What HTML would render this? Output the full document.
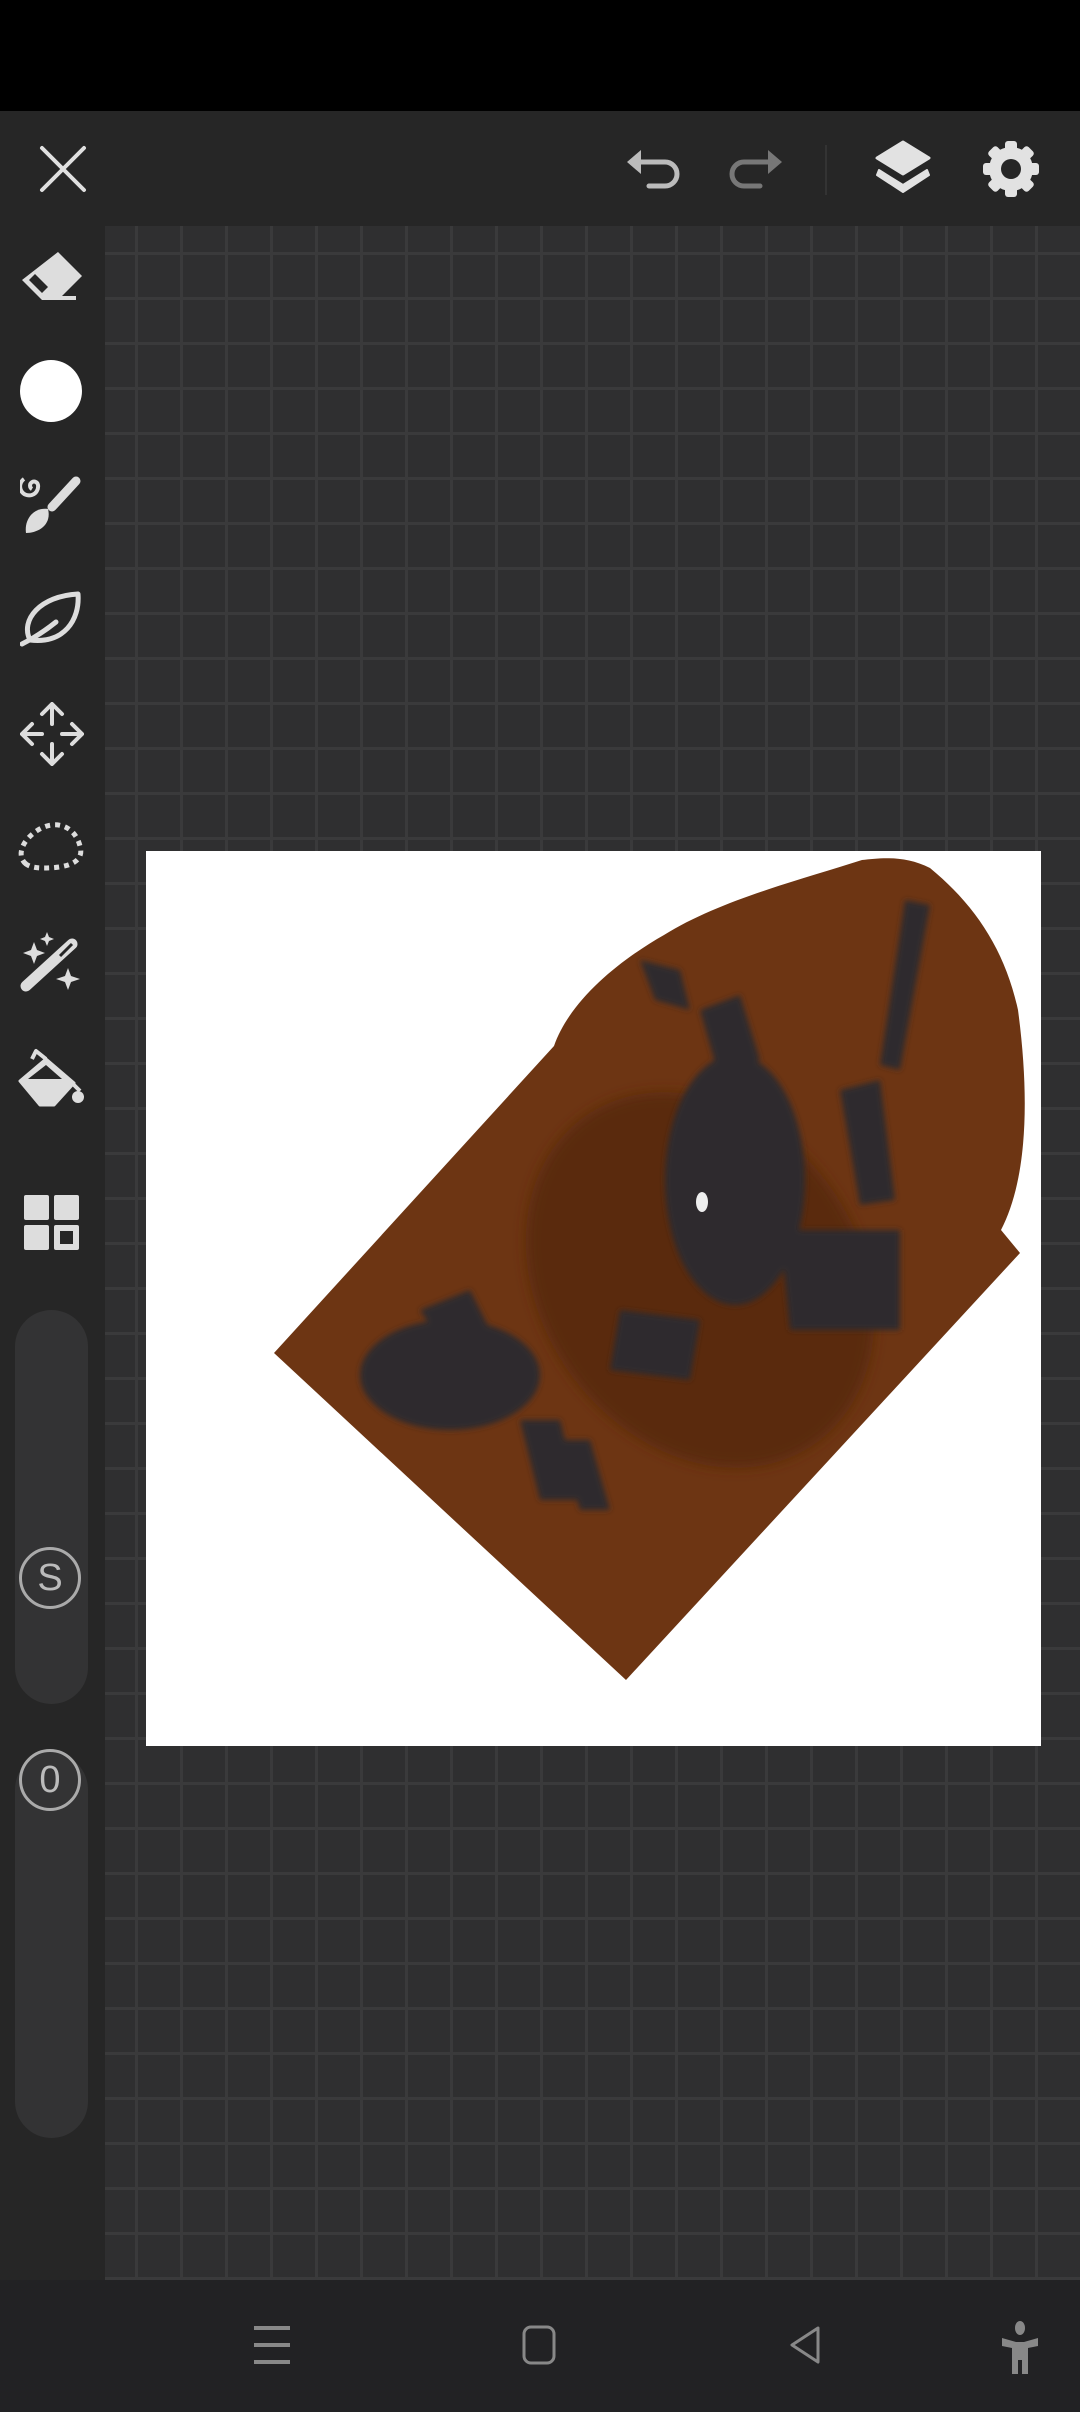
<!DOCTYPE html>
<html><head><meta charset="utf-8"><style>
html,body{margin:0;padding:0;width:1080px;height:2412px;overflow:hidden;background:#262626;font-family:"Liberation Sans",sans-serif}
#top{position:absolute;left:0;top:0;width:1080px;height:111px;background:#000}
#bar{position:absolute;left:0;top:111px;width:1080px;height:115px;background:#262626}
#side{position:absolute;left:0;top:226px;width:105px;height:2054px;background:#262626}
#canvas{position:absolute;left:105px;top:226px;width:975px;height:2054px;background-color:#2f2f30;
background-image:linear-gradient(to right,#3a3a3b 0,#3a3a3b 3px,transparent 3px),linear-gradient(to bottom,#3a3a3b 0,#3a3a3b 3px,transparent 3px);
background-size:45px 45px;background-position:30px 26px}
#nav{position:absolute;left:0;top:2280px;width:1080px;height:132px;background:#222224}
svg{position:absolute}
.sl{position:absolute;left:15px;width:73px;background:#333334;border-radius:37px}
.badge{position:absolute;left:19px;width:62px;height:62px;border:3px solid #aaa;border-radius:50%;box-sizing:border-box;color:#bbb;font-size:38px;text-align:center;line-height:56px;background:#333334}
</style></head><body>
<div id="top"></div>
<div id="bar"></div>
<div id="side"></div>
<div id="canvas"></div>
<div id="nav"></div>

<svg style="left:38px;top:144px" width="50" height="50" viewBox="0 0 50 50"><path d="M4 4L46 46M46 4L4 46" stroke="#e0e0e0" stroke-width="4" stroke-linecap="round"/></svg>
<svg style="left:627px;top:144px" width="60" height="50" viewBox="0 0 60 50"><path d="M0 18L14 6V30Z" fill="#bbb"/><path d="M12 18H38A12 12 0 0 1 38 42H22" stroke="#bbb" stroke-width="5" fill="none" stroke-linecap="round"/></svg>
<svg style="left:722px;top:144px" width="60" height="50" viewBox="0 0 60 50"><path d="M60 18L46 6V30Z" fill="#777"/><path d="M48 18H22A12 12 0 0 0 22 42H38" stroke="#777" stroke-width="5" fill="none" stroke-linecap="round"/></svg>
<div style="position:absolute;left:825px;top:145px;width:2px;height:50px;background:#333"></div>
<svg style="left:873px;top:140px" width="60" height="60" viewBox="0 0 60 60"><path d="M30 2L56 18L30 34L4 18Z" fill="#e2e2e2" stroke="#e2e2e2" stroke-width="3" stroke-linejoin="round"/><path d="M6 30L30 45L54 30L56 35L30 52L4 35Z" fill="#e2e2e2" stroke="#e2e2e2" stroke-width="2" stroke-linejoin="round"/></svg>
<svg style="left:981px;top:139px" width="60" height="60" viewBox="0 0 60 60"><g fill="#e2e2e2"><circle cx="30" cy="30" r="22"/><g id="t"><rect x="24" y="2" width="12" height="12" rx="3"/></g><use href="#t" transform="rotate(45 30 30)"/><use href="#t" transform="rotate(90 30 30)"/><use href="#t" transform="rotate(135 30 30)"/><use href="#t" transform="rotate(180 30 30)"/><use href="#t" transform="rotate(225 30 30)"/><use href="#t" transform="rotate(270 30 30)"/><use href="#t" transform="rotate(315 30 30)"/></g><circle cx="30" cy="30" r="10" fill="#262626"/></svg>

<svg style="left:20px;top:250px" width="64" height="56" viewBox="0 0 64 56"><path d="M38 2L62 26L38 50L22 50L2 30Z" fill="#ddd"/><path d="M9 30L22 43L28 37L15 24Z" fill="#262626"/><path d="M24 48H56" stroke="#ddd" stroke-width="4"/></svg>
<div style="position:absolute;left:20px;top:360px;width:62px;height:62px;border-radius:50%;background:#fff"></div>
<svg style="left:20px;top:475px" width="62" height="60" viewBox="0 0 62 60"><path d="M56 6L32 32" stroke="#ddd" stroke-width="9" stroke-linecap="round"/><path d="M28 34C14 32 4 44 6 58C18 58 32 50 28 34Z" fill="#ddd"/><path d="M12 14A4 4 0 1 1 18 10A9 9 0 1 1 4 4" stroke="#ddd" stroke-width="4" fill="none"/></svg>
<svg style="left:20px;top:590px" width="64" height="58" viewBox="0 0 64 58"><path d="M10 50C0 30 20 6 58 4C60 30 44 54 10 50Z" stroke="#ddd" stroke-width="5" fill="none" stroke-linejoin="round"/><path d="M2 54C14 48 26 40 36 32" stroke="#ddd" stroke-width="5" stroke-linecap="round" fill="none"/></svg>
<svg style="left:20px;top:702px" width="64" height="64" viewBox="0 0 64 64"><g stroke="#ddd" stroke-width="4" fill="none" stroke-linecap="round"><path d="M32 4V22M32 42V60M4 32H22M42 32H60"/><path d="M22 12L32 2L42 12M22 52L32 62L42 52M12 22L2 32L12 42M52 22L62 32L52 42"/></g></svg>
<svg style="left:18px;top:820px" width="68" height="54" viewBox="0 0 68 54"><path d="M8 44C-2 36 4 20 20 10C36 0 56 4 62 26C68 46 40 48 26 48C18 48 12 47 8 44Z" stroke="#ddd" stroke-width="5" fill="none" stroke-dasharray="5 5"/></svg>
<svg style="left:20px;top:930px" width="64" height="64" viewBox="0 0 64 64"><path d="M6 56L52 14" stroke="#ddd" stroke-width="11" stroke-linecap="round"/><path d="M40 26L52 14" stroke="#262626" stroke-width="3"/><path d="M14 12L17 20L25 23L17 26L14 34L11 26L3 23L11 20Z M27 2L29 7L34 9L29 11L27 16L25 11L20 9L25 7Z M48 38L51 46L60 49L51 52L48 60L45 52L36 49L45 46Z" fill="#ddd"/></svg>
<svg style="left:18px;top:1045px" width="68" height="62" viewBox="0 0 68 62"><path d="M2 36L28 14L56 38L36 60L22 60Z" fill="#ddd" stroke="#ddd" stroke-width="3" stroke-linejoin="round"/><path d="M10 34L28 20L44 34Z" fill="#262626"/><path d="M28 14L18 6L14 14" stroke="#ddd" stroke-width="4" fill="none" stroke-linejoin="round"/><ellipse cx="60" cy="52" rx="6" ry="6" fill="#ddd"/><path d="M54 38L62 46" stroke="#ddd" stroke-width="4"/></svg>
<svg style="left:24px;top:1195px" width="56" height="56" viewBox="0 0 56 56"><g fill="#ddd"><rect x="0" y="0" width="25" height="25" rx="2"/><rect x="30" y="0" width="25" height="25" rx="2"/><rect x="0" y="30" width="25" height="25" rx="2"/><rect x="30" y="30" width="25" height="25" rx="2"/></g><rect x="36" y="36" width="13" height="13" fill="#262626"/></svg>

<div class="sl" style="top:1310px;height:394px"></div>
<div class="badge" style="top:1547px">S</div>
<div class="sl" style="top:1753px;height:385px"></div>
<div class="badge" style="top:1749px">0</div>

<div style="position:absolute;left:146px;top:851px;width:895px;height:895px;background:#fff"></div>
<svg style="left:146px;top:851px" width="895" height="895" viewBox="146 851 895 895">
<defs><filter id="b"><feGaussianBlur stdDeviation="6"/></filter><filter id="b2"><feGaussianBlur stdDeviation="3"/></filter></defs>
<path d="M274 1353L626 1680L1020 1253L1001 1230C1027 1180 1030 1100 1018 1010C1005 950 975 905 930 868C905 855 880 858 862 860C800 880 720 900 664 935C620 960 570 1000 554 1046Z" fill="#6d3513"/>
<ellipse cx="700" cy="1280" rx="160" ry="200" fill="#5a2b0f" filter="url(#b)" transform="rotate(-35 700 1280)"/>
<g fill="#2d2b2e" filter="url(#b2)">
<ellipse cx="735" cy="1180" rx="70" ry="125"/>
<ellipse cx="450" cy="1375" rx="90" ry="55"/>
<path d="M700 1010L740 995L760 1060L720 1080Z"/>
<path d="M640 960L680 970L690 1010L655 1000Z"/>
<path d="M905 900L930 905L900 1070L880 1065Z"/>
<path d="M840 1090L880 1080L895 1200L860 1205Z"/>
<path d="M780 1230L900 1230L900 1330L790 1330Z"/>
<path d="M520 1420L560 1420L580 1500L540 1500Z"/>
<path d="M560 1440L590 1440L610 1510L580 1510Z"/>
<path d="M420 1310L470 1290L490 1330L440 1340Z"/>
<path d="M620 1310L700 1320L690 1380L610 1370Z"/>
</g>
<ellipse cx="702" cy="1202" rx="6" ry="10" fill="#eee"/>
</svg>

<svg style="left:253px;top:2325px" width="38" height="40" viewBox="0 0 38 40"><g stroke="#888" stroke-width="4"><path d="M1 3H37M1 20H37M1 37H37"/></g></svg>
<svg style="left:522px;top:2325px" width="34" height="40" viewBox="0 0 34 40"><rect x="2" y="2" width="30" height="36" rx="7" stroke="#888" stroke-width="3" fill="none"/></svg>
<svg style="left:787px;top:2325px" width="36" height="40" viewBox="0 0 36 40"><path d="M31 3L5 20L31 37Z" stroke="#888" stroke-width="3" fill="none" stroke-linejoin="round"/></svg>
<svg style="left:1000px;top:2320px" width="40" height="56" viewBox="0 0 40 56"><g fill="#888"><ellipse cx="20" cy="8" rx="5" ry="7"/><path d="M2 18L16 22H24L38 18L38 26L28 28V54H22V40H18V54H12V28L2 26Z"/></g></svg>
</body></html>
